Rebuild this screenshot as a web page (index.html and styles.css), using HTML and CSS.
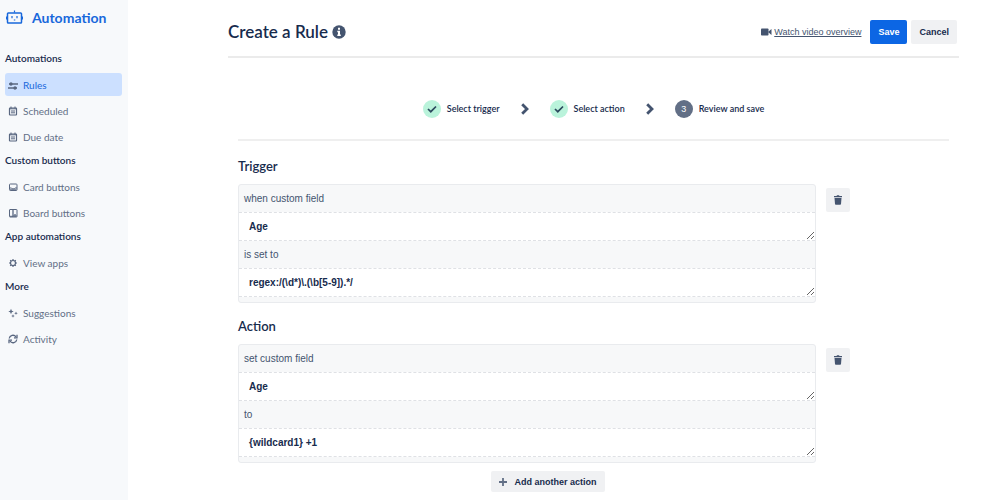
FILE: index.html
```html
<!DOCTYPE html>
<html lang="en">
<head>
    <meta charset="UTF-8">
    <title>Automation</title>
    <link rel="stylesheet" href="styles.css">
</head>
<body>
    <aside class="sidebar">
        <div class="brand">
            <svg class="brand-icon" viewBox="0 0 18 16" fill="none" stroke="currentColor" stroke-width="1.5">
                <rect x="1.500" y="4" width="14" height="10" rx=".8"/>
                <path d="M.5 7.500v3M16.500 7.500v3" stroke-width="1"/>
                <path d="M8.500 1.500v2M6 7v2.200M11 7v2.200M7.800 11h1.500" stroke-width="1.200"/>
            </svg>
            Automation
        </div>

        <nav class="menu">
            <section>
                <h2>Automations</h2>
                <ul>
                    <li><a class="active" href="#">
                        <svg viewBox="0 0 10 10" fill="none" stroke="currentColor" stroke-width="1.3"><path d="M1 4h9M0 8h9"/><circle cx="3" cy="4" r="1" fill="currentColor"/><circle cx="7" cy="8" r="1" fill="currentColor"/></svg>
                        Rules</a></li>
                    <li><a href="#">
                        <svg viewBox="0 0 10 10" fill="none" stroke="currentColor"><rect x="1.500" y="2" width="7" height="7" rx=".5" stroke-width="1.200"/><path d="M1.500 2.800h7M3 .5v2M7 .5v2M3 5h4M3 6.800h4"/></svg>
                        Scheduled</a></li>
                    <li><a href="#">
                        <svg viewBox="0 0 10 10" fill="none" stroke="currentColor"><rect x="1.500" y="2" width="7" height="7" rx=".5" stroke-width="1.200"/><path d="M1.500 2.800h7M3 .5v2M7 .5v2M3 5h4M3 6.800h4"/></svg>
                        Due date</a></li>
                </ul>
            </section>
            <section>
                <h2>Custom buttons</h2>
                <ul>
                    <li><a href="#">
                        <svg viewBox="0 0 10 10" fill="none" stroke="currentColor"><rect x="1.500" y="2" width="7.500" height="6.500" rx=".8"/><path d="M1.500 6h2l.6.800h2.300l.6-.8h2M2 7.800h6.500"/></svg>
                        Card buttons</a></li>
                    <li><a href="#">
                        <svg viewBox="0 0 10 10" fill="none" stroke="currentColor"><rect x="1.500" y="1.500" width="7.500" height="7.500" rx=".5"/><path d="M5 1.500v7.500M7 6v3" stroke-width="1.300"/><path d="M5 8h4M2 8.300h3"/></svg>
                        Board buttons</a></li>
                </ul>
            </section>
            <section>
                <h2>App automations</h2>
                <ul>
                    <li><a href="#">
                        <svg viewBox="0 0 10 10" fill="none" stroke="currentColor"><circle cx="5" cy="5" r="2.500" stroke-width="1.200"/><path d="M5 1v1.500M5 7.500v1.500M1 5h1.500M7.500 5H9M2.200 2.200l1 1M6.800 6.800l1 1M7.800 2.200l-1 1M3.200 6.800l-1 1" stroke-width="1.200"/></svg>
                        View apps</a></li>
                </ul>
            </section>
            <section>
                <h2>More</h2>
                <ul>
                    <li><a href="#">
                        <svg viewBox="0 0 10 10" fill="currentColor"><path d="M3 .8l.8 1.900 1.900.8-1.900.8L3 6.200l-.8-1.900L.3 3.500l1.900-.8zM8 3.500l.5 1.200 1.300.5-1.300.5L8 7l-.5-1.300-1.300-.5 1.300-.5zM5 6.300l.5 1.200 1.200.5-1.200.5L5 9.800l-.5-1.300L3.200 8l1.300-.5z"/></svg>
                        Suggestions</a></li>
                    <li><a href="#">
                        <svg viewBox="0 0 10 10" fill="none" stroke="currentColor" stroke-width="1.300"><path d="M1.200 4.500A3.800 3.800 0 0 1 8 2.800M8.800 5.500A3.800 3.800 0 0 1 2 7.200"/><path d="M9 .8v3H6M1 9.200v-3h3"/></svg>
                        Activity</a></li>
                </ul>
            </section>
        </nav>
    </aside>

    <main class="main">
        <header class="page-header">
            <h1>Create a Rule</h1>
            <svg class="info" viewBox="0 0 14 14"><circle cx="7" cy="7" r="6.700" fill="#44546f"/><path d="M6 2.700h2v2H6zM5.300 5.700H8v3.800h.8V11H5.300V9.500H6V7.200h-.7z" fill="#fff"/></svg>
            <a class="video" href="#">
                <svg viewBox="0 0 11 8" fill="#44546f"><rect y=".5" width="7.500" height="7" rx=".8"/><path d="M7 4l3.500-3v6z"/></svg>
                <span>Watch video overview</span>
            </a>
            <button class="btn primary">Save</button>
            <button class="btn">Cancel</button>
        </header>

        <div class="content">
            <ol class="steps">
                <li class="step">
                    <span class="dot done"><svg viewBox="0 0 10 10" fill="none" stroke="#2c4a5e" stroke-width="1.700"><path d="M1 5l2.800 2.700L9 2.500"/></svg></span>
                    Select trigger
                </li>
                <li class="arrow"><svg viewBox="0 0 8 12" fill="none" stroke="#44546f" stroke-width="2.800"><path d="M1.200 1.200L6 6l-4.800 4.800"/></svg></li>
                <li class="step">
                    <span class="dot done"><svg viewBox="0 0 10 10" fill="none" stroke="#2c4a5e" stroke-width="1.700"><path d="M1 5l2.800 2.700L9 2.500"/></svg></span>
                    Select action
                </li>
                <li class="arrow"><svg viewBox="0 0 8 12" fill="none" stroke="#44546f" stroke-width="2.800"><path d="M1.200 1.200L6 6l-4.800 4.800"/></svg></li>
                <li class="step">
                    <span class="dot">3</span>
                    Review and save
                </li>
            </ol>

            <section class="rule">
                <h2>Trigger</h2>
                <div class="rule-row">
                    <div class="fields">
                        <label for="trigger-field">when custom field</label>
                        <textarea id="trigger-field" rows="1">Age</textarea>
                        <label for="trigger-value">is set to</label>
                        <textarea id="trigger-value" rows="1">regex:/(\d*)\.(\b[5-9]).*/</textarea>
                    </div>
                    <button class="btn delete" aria-label="Delete trigger">
                        <svg viewBox="0 0 10 10" fill="#44546f"><path d="M1 1h2.500L4 .3h2L6.500 1H9v1.300H1zM1.500 3h7L8 9q-.1.800-.8.800H2.800Q2.100 9.800 2 9z"/></svg>
                    </button>
                </div>
            </section>

            <section class="rule">
                <h2>Action</h2>
                <div class="rule-row">
                    <div class="fields">
                        <label for="action-field">set custom field</label>
                        <textarea id="action-field" rows="1">Age</textarea>
                        <label for="action-value">to</label>
                        <textarea id="action-value" rows="1">{wildcard1} +1</textarea>
                    </div>
                    <button class="btn delete" aria-label="Delete action">
                        <svg viewBox="0 0 10 10" fill="#44546f"><path d="M1 1h2.500L4 .3h2L6.500 1H9v1.300H1zM1.500 3h7L8 9q-.1.800-.8.800H2.800Q2.100 9.800 2 9z"/></svg>
                    </button>
                </div>
            </section>

            <div class="add-row">
                <button class="btn add">
                    <svg viewBox="0 0 8 8" stroke="#626f86" stroke-width="1.800"><path d="M4 0v8M0 4h8"/></svg>
                    Add another action
                </button>
            </div>
        </div>
    </main>
</body>
</html>
```

FILE: styles.css
```css
* {
    box-sizing: border-box;
}
body {
    display: flex;
    min-height: 100vh;
    margin: 0;
    background-color: #fff;
    color: #172b4d;
    font-family: Lato, sans-serif;
}
h1, h2, ul, ol {
    margin: 0;
    padding: 0;
}
ul, ol {
    list-style: none;
}
svg {
    display: block;
    flex: none;
}

/* sidebar */
.sidebar {
    flex: none;
    width: 128px;
    padding: 8px 6px 0 5px;
    background-color: #f7f9fb;
}
.brand {
    display: flex;
    align-items: center;
    gap: 8px;
    height: 18px;
    margin-bottom: 24px;
    padding-left: 1px;
    color: #1868db;
    font-size: 14px;
    font-weight: bold;
}
.brand-icon {
    width: 18px;
    height: 16px;
}
.menu {
    display: grid;
    gap: 4px;
}
.menu h2 {
    margin-bottom: 7px;
    font-size: 10px;
    font-weight: 600;
    line-height: 16px;
}
.menu ul {
    display: grid;
    gap: 3px;
}
.menu a {
    display: flex;
    align-items: center;
    gap: 5px;
    height: 23px;
    padding: 0 3px;
    border-radius: 3px;
    color: #626f86;
    font-size: 10px;
    text-decoration: none;
}
.menu a.active {
    background-color: #cce0ff;
    color: #1868db;
}
.menu svg {
    width: 10px;
    height: 10px;
    color: #596780;
}

/* main */
.main {
    flex: 1;
    padding: 0 40px 0 100px;
}
.page-header {
    display: flex;
    align-items: center;
    height: 58px;
    padding-top: 7px;
    border-bottom: 2px solid #ebebeb;
}
.page-header h1 {
    font-size: 17px;
    font-weight: 600;
}
.info {
    width: 14px;
    height: 14px;
    margin-left: 4px;
}
.video {
    display: flex;
    align-items: center;
    gap: 2px;
    margin-left: auto;
    margin-right: 7px;
    color: #44546f;
    font-family: "Liberation Sans", Arial, sans-serif;
    font-size: 9px;
    text-decoration: none;
}
.video span {
    text-decoration: underline;
}
.video svg {
    width: 11px;
    height: 8px;
}
.btn {
    height: 24px;
    margin: 0 2px;
    padding: 0 8px;
    border: none;
    border-radius: 2px;
    background-color: #f0f1f3;
    color: #172b4d;
    font-family: "Liberation Sans", Arial, sans-serif;
    font-size: 9px;
    font-weight: bold;
    cursor: pointer;
}
.btn.primary {
    background-color: #0c66e4;
    color: #fff;
}

.content {
    padding: 0 10px;
}
.steps {
    display: flex;
    justify-content: center;
    align-items: center;
    gap: 21px;
    height: 83px;
    margin-bottom: 2px;
    padding-top: 20px;
    border-bottom: 2px solid #efefef;
}
.step {
    display: flex;
    align-items: center;
    gap: 6px;
    font-size: 9px;
    font-weight: 600;
}
.dot {
    display: flex;
    justify-content: center;
    align-items: center;
    width: 18px;
    height: 18px;
    border-radius: 50%;
    background-color: #626f86;
    color: #fff;
    font-family: "Liberation Sans", Arial, sans-serif;
    font-weight: normal;
}
.dot.done {
    background-color: #baf3db;
}
.dot svg {
    width: 10px;
    height: 10px;
}
.arrow svg {
    width: 8px;
    height: 12px;
}

.rule {
    padding: 14px 99px 0 0;
}
.rule h2 {
    margin-bottom: 9px;
    font-size: 13px;
    font-weight: 600;
    line-height: 18px;
}
.rule-row {
    display: flex;
    align-items: flex-start;
    gap: 10px;
}
.fields {
    flex: 1;
    padding-bottom: 5px;
    border: 1px solid #e9ebee;
    border-radius: 3px;
    background-color: #f7f8f9;
    font-family: "Liberation Sans", Arial, sans-serif;
    font-size: 10px;
}
.fields label {
    display: block;
    height: 27px;
    padding: 0 5px;
    color: #44546f;
    line-height: 27px;
}
.fields textarea {
    display: block;
    width: 100%;
    height: 29px;
    padding: 0 10px;
    border: 1px dashed #dfe1e5;
    border-width: 1px 0;
    outline: none;
    background-color: #fff;
    color: #172b4d;
    font: bold 10px/27px "Liberation Sans", Arial, sans-serif;
    overflow: hidden;
    resize: vertical;
}
.btn.delete {
    display: flex;
    justify-content: center;
    align-items: center;
    width: 24px;
    margin: 4px 0 0;
    padding: 0;
}
.delete svg {
    width: 10px;
    height: 10px;
}
.add-row {
    display: flex;
    justify-content: center;
    padding: 8px 99px 8px 8px;
}
.btn.add {
    display: flex;
    align-items: center;
    gap: 7px;
    height: 21px;
    margin: 0;
}
.add svg {
    width: 8px;
    height: 8px;
}
```
